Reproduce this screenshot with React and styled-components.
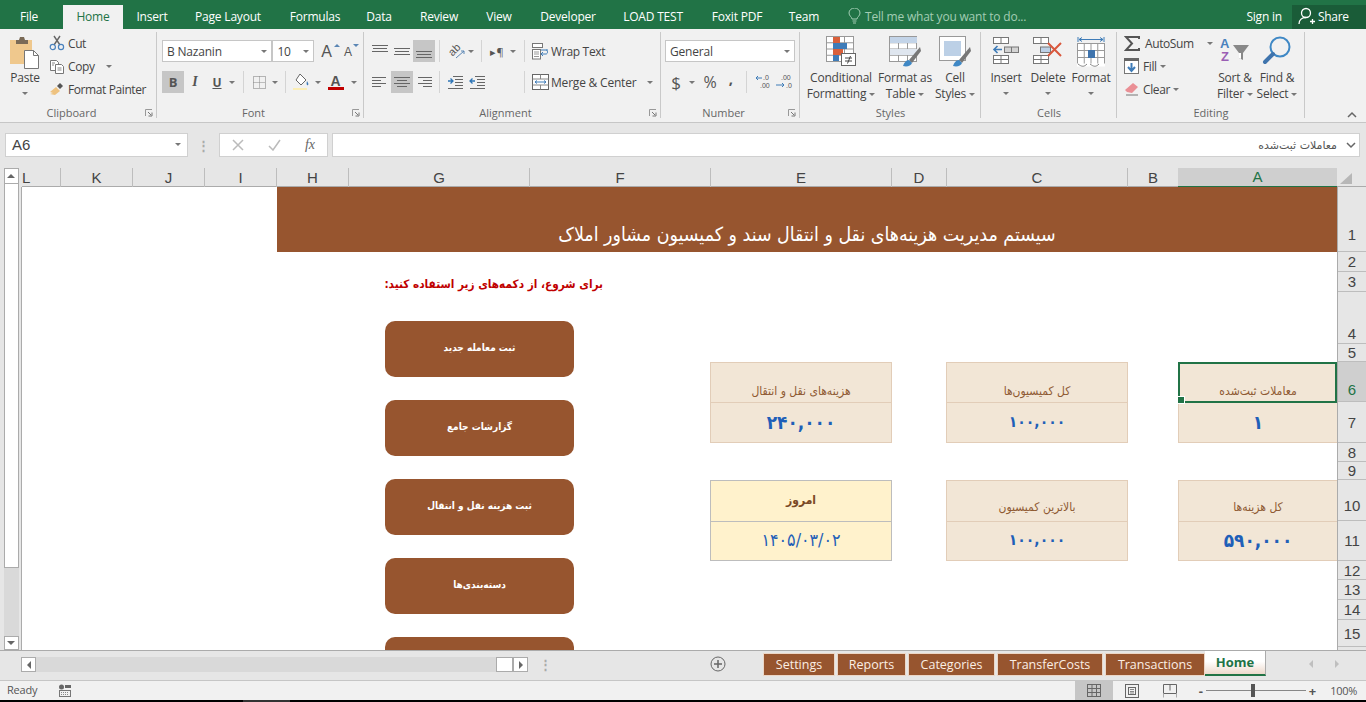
import React from "react";
import styled, { createGlobalStyle } from "styled-components";

const GlobalStyle = createGlobalStyle`
  html, body { margin: 0; padding: 0; background: #000; overflow: hidden; }
  * { box-sizing: border-box; }
`;

const UI = `"Open Sans", "Noto Sans", sans-serif`;
const FA = `"DejaVu Sans", sans-serif`;
const FA_NARROW = `"DejaVu Sans Condensed", "DejaVu Sans", sans-serif`;
const BROWN = "#97552f";
const COLS = "39px repeat(4, 72px) 181px 181px 181px 55px 181px 51px 158px";
const ROWS = "65px 20px 20px 52px 18px 40px 41px 19px 18px 41px 40px 19px 20px 20px 27px 20px";

const Page = styled.div`
  width: 1366px;
  height: 702px;
  display: grid;
  grid-template-rows: 29px 94px 45px 482px 30px 20px 2px;
  font-family: ${UI};
  font-size: 12px;
  color: #444;
  overflow: hidden;
`;

/* title row */
const TabRow = styled.div`
  background: #217346;
  display: flex;
  align-items: flex-end;
`;
const MenuTab = styled.div`
  width: ${(p) => p.$w}px;
  margin-left: ${(p) => p.$ml ?? 0}px;
  height: 24px;
  padding-bottom: 2px;
  display: flex;
  align-items: center;
  justify-content: center;
  white-space: nowrap;
  letter-spacing: -0.2px;
  color: ${(p) => (p.$active ? "#217346" : "#fff")};
  background: ${(p) => (p.$active ? "#f1f1f1" : "transparent")};
`;
const TellMe = styled.div`
  margin-left: 21px;
  height: 24px;
  padding-bottom: 2px;
  display: flex;
  align-items: center;
  gap: 4px;
  color: #a3cdb4;
  letter-spacing: -0.2px;
`;
const SignIn = styled.div`
  margin-left: auto;
  height: 24px;
  padding-bottom: 2px;
  display: flex;
  align-items: center;
  color: #fff;
  padding-right: 10px;
  letter-spacing: -0.2px;
`;
const Share = styled.div`
  width: 74px;
  height: 24px;
  padding-left: 6px;
  padding-bottom: 2px;
  display: flex;
  align-items: center;
  gap: 2px;
  color: #fff;
  background: #1a5c38;
  letter-spacing: -0.3px;
`;

/* ribbon */
const Ribbon = styled.div`
  background: #f1f1f1;
  border-bottom: 1px solid #c6c6c6;
  display: flex;
  position: relative;
`;
const Group = styled.div`
  width: ${(p) => p.$w}px;
  display: flex;
  flex-direction: column;
  position: relative;
  &::after {
    content: "";
    position: absolute;
    right: 0;
    top: 3px;
    bottom: 4px;
    width: 1px;
    background: #c9c9c9;
  }
`;
const GroupBody = styled.div`
  height: 76px;
  display: flex;
  padding: ${(p) => p.$top ?? 7}px 0 0 ${(p) => p.$left ?? 0}px;
  flex-direction: ${(p) => (p.$col ? "column" : "row")};
  gap: ${(p) => p.$gap ?? 0}px;
`;
const GroupFoot = styled.div`
  flex: 1;
  display: flex;
  align-items: center;
  font-size: 11px;
  color: #666;
  padding-bottom: 2px;
`;
const FootLabel = styled.div`
  flex: 1;
  text-align: center;
`;
const Launcher = styled.svg`
  width: 8px;
  height: 8px;
  margin: 0 4px 0 2px;
  flex: none;
`;
const ToolRows = styled.div`
  display: flex;
  flex-direction: column;
  gap: 9px;
  padding-top: 4px;
`;
const Row = styled.div`
  display: flex;
  align-items: center;
  height: ${(p) => p.$h ?? 22}px;
`;
const BigButton = styled.div`
  width: ${(p) => p.$w}px;
  display: flex;
  flex-direction: column;
  align-items: center;
  text-align: center;
  line-height: 16px;
  letter-spacing: -0.2px;
  white-space: nowrap;
`;
const BigIcon = styled.div`
  height: 34px;
  display: flex;
  align-items: flex-start;
  justify-content: center;
`;
const Caret = styled.span`
  display: inline-block;
  flex: none;
  width: 0;
  height: 0;
  margin-left: ${(p) => p.$ml ?? 0}px;
  margin-top: ${(p) => p.$mt ?? 0}px;
  border-left: 3px solid transparent;
  border-right: 3px solid transparent;
  border-top: 3px solid #777;
  vertical-align: middle;
`;
const SmallStack = styled.div`
  width: ${(p) => p.$w}px;
  margin-left: ${(p) => p.$ml ?? 0}px;
  margin-top: -4px;
  display: flex;
  flex-direction: column;
  gap: 1px;
  letter-spacing: -0.4px;
`;
const SmallItem = styled.div`
  display: flex;
  align-items: center;
  height: 22px;
  gap: ${(p) => p.$gap ?? 3}px;
  white-space: nowrap;
`;
const WideItem = styled(SmallItem)`
  gap: 2px;
  letter-spacing: ${(p) => p.$ls ?? -0.2}px;
`;
const Combo = styled.div`
  width: ${(p) => p.$w}px;
  height: 22px;
  background: #fff;
  border: 1px solid #c6c6c6;
  display: flex;
  align-items: center;
  justify-content: space-between;
  padding: 0 4px;
  letter-spacing: -0.2px;
`;
const Tool = styled.div`
  width: ${(p) => p.$w ?? 22}px;
  height: ${(p) => p.$h ?? 22}px;
  flex: none;
  display: flex;
  align-items: center;
  justify-content: center;
  padding-bottom: ${(p) => p.$pb ?? 0}px;
  background: ${(p) => (p.$on ? "#c6c6c6" : "transparent")};
  color: #555;
  font-family: ${(p) => (p.$serif ? `"Liberation Serif", serif` : UI)};
  font-weight: ${(p) => (p.$bold ? 700 : 400)};
  font-style: ${(p) => (p.$italic ? "italic" : "normal")};
  text-decoration: ${(p) => (p.$under ? "underline" : "none")};
  font-size: ${(p) => p.$size ?? 13}px;
`;
const RowSep = styled.div`
  width: 1px;
  height: 22px;
  background: #d4d4d4;
  flex: none;
  margin-left: ${(p) => p.$l}px;
  margin-right: ${(p) => p.$r}px;
`;
const GrowA = styled.div`
  position: relative;
  width: ${(p) => p.$w}px;
  margin-left: ${(p) => p.$ml ?? 0}px;
  height: 20px;
  display: flex;
  align-items: flex-end;
  font-family: "Liberation Sans", sans-serif;
  font-size: ${(p) => p.$size}px;
  line-height: 18px;
  color: #555;
  &::after {
    content: "";
    position: absolute;
    left: ${(p) => p.$size - 3}px;
    top: 3px;
    border-left: 3px solid transparent;
    border-right: 3px solid transparent;
    ${(p) => (p.$down ? "border-top: 3px solid #5b86b4;" : "border-bottom: 3px solid #5b86b4;")}
  }
`;
const CollapseBtn = styled.svg`
  position: absolute;
  right: 9px;
  bottom: 4px;
  width: 10px;
  height: 7px;
`;
const TinyText = styled.text`
  font-family: "Liberation Sans", sans-serif;
  font-size: 7px;
  fill: #555;
`;

/* formula bar */
const FormulaStrip = styled.div`
  background: #e6e6e6;
  padding: 10px 6px 11px 5px;
  display: flex;
  align-items: stretch;
`;
const NameBox = styled.div`
  width: 183px;
  background: #fff;
  border: 1px solid #d0d0d0;
  display: flex;
  align-items: center;
  justify-content: space-between;
  padding: 0 6px 1px 6px;
  font-family: "Liberation Sans", sans-serif;
  font-size: 15px;
  color: #444;
`;
const Dots = styled.div`
  width: 31px;
  display: flex;
  align-items: center;
  justify-content: center;
  color: #aaa;
  font-size: 13px;
  font-weight: 700;
`;
const FxBox = styled.div`
  width: 109px;
  margin-right: 4px;
  background: #fff;
  border: 1px solid #d0d0d0;
  display: flex;
  align-items: center;
  justify-content: space-between;
  padding: 0 12px 0 12px;
  color: #bbb;
`;
const FxMark = styled.span`
  font-family: "Liberation Serif", serif;
  font-style: italic;
  font-size: 14px;
  color: #666;
`;
const FormulaInput = styled.div`
  flex: 1;
  background: #fff;
  border: 1px solid #d0d0d0;
  display: flex;
  align-items: center;
  padding: 0 3px 0 0;
`;
const FormulaText = styled.div`
  flex: 1;
  direction: rtl;
  font-family: ${FA};
  font-size: 11px;
  color: #555;
`;
const ChevronBox = styled.svg`
  width: 10px;
  height: 7px;
  margin-left: 9px;
`;

/* sheet */
const SheetWrap = styled.div`
  display: flex;
  background: #e6e6e6;
  min-height: 0;
`;
const VScroll = styled.div`
  width: 22px;
  display: flex;
  flex-direction: column;
  align-items: center;
`;
const ScrollArrow = styled.div`
  width: 15px;
  height: ${(p) => p.$h ?? 15}px;
  flex: none;
  background: #fff;
  border: 1px solid #ababab;
  display: flex;
  align-items: center;
  justify-content: center;
`;
const Tri = styled.span`
  width: 0;
  height: 0;
  ${(p) => p.$dir === "up" && "border-left:4px solid transparent;border-right:4px solid transparent;border-bottom:4px solid #666;"}
  ${(p) => p.$dir === "down" && "border-left:4px solid transparent;border-right:4px solid transparent;border-top:4px solid #666;"}
  ${(p) => p.$dir === "left" && "border-top:4px solid transparent;border-bottom:4px solid transparent;border-right:4px solid #666;"}
  ${(p) => p.$dir === "right" && "border-top:4px solid transparent;border-bottom:4px solid transparent;border-left:4px solid #666;"}
`;
const VThumb = styled.div`
  width: 15px;
  height: 384px;
  flex: none;
  background: #fff;
  border: 1px solid #ababab;
  border-top: 0;
`;
const VTrack = styled.div`
  flex: 1;
  width: 15px;
  background: #d9d9d9;
`;
const SheetMain = styled.div`
  flex: 1;
  display: flex;
  flex-direction: column;
  min-width: 0;
`;
const ColumnBar = styled.div`
  height: 19px;
  display: grid;
  grid-template-columns: ${COLS} 29px;
  background: #e6e6e6;
  border-bottom: 1px solid #ababab;
`;
const ColHead = styled.div`
  display: flex;
  align-items: center;
  justify-content: ${(p) => (p.$start ? "flex-start" : "center")};
  padding-bottom: 1px;
  font-family: "Liberation Sans", sans-serif;
  font-size: 15px;
  color: ${(p) => (p.$on ? "#217346" : "#444")};
  background: ${(p) => (p.$on ? "#cfcfcf" : "transparent")};
  border-right: 1px solid #bdbdbd;
  ${(p) => p.$on && "border-bottom: 2px solid #217346; margin: 0 0 -1px -1px; border-right: 0;"}
`;
const Corner = styled.div`
  position: relative;
  &::after {
    content: "";
    position: absolute;
    left: 3px;
    bottom: 3px;
    border-left: 12px solid transparent;
    border-bottom: 11px solid #b7b7b7;
  }
`;
const SheetBody = styled.div`
  flex: 1;
  min-height: 0;
  display: flex;
  position: relative;
  overflow: hidden;
  border-left: 1px solid #ababab;
  margin-left: -1px;
`;
const Cells = styled.div`
  width: 1315px;
  background: #fff;
  display: grid;
  grid-template-columns: ${COLS};
  grid-template-rows: ${ROWS};
`;
const TitleCell = styled.div`
  grid-column: 5 / 13;
  grid-row: 1;
  background: ${BROWN};
  color: #fff;
  direction: rtl;
  font-family: ${FA_NARROW};
  font-size: 19.4px;
  display: flex;
  align-items: flex-end;
  justify-content: center;
  padding-bottom: 6px;
  white-space: nowrap;
`;
const LabelCell = styled.div`
  grid-column: ${(p) => p.$col};
  grid-row: ${(p) => p.$row};
  margin-left: -1px;
  position: relative;
  background: ${(p) => (p.$yellow ? "#fff2cc" : "#f2e6d6")};
  border: 1px solid ${(p) => (p.$yellow ? "#bdbdbd" : "#e2cdb8")};
  border-bottom-width: 0;
  border-right-width: ${(p) => (p.$edge ? 0 : 1)}px;
  color: ${(p) => (p.$yellow ? "#7b4a26" : "#8f5a33")};
  direction: rtl;
  font-family: ${FA_NARROW};
  font-size: 12px;
  font-weight: ${(p) => (p.$yellow ? 700 : 400)};
  display: flex;
  justify-content: center;
  align-items: ${(p) => (p.$yellow ? "center" : "flex-end")};
  padding-bottom: ${(p) => p.$pb}px;
  white-space: nowrap;
`;
const ValueCell = styled.div`
  grid-column: ${(p) => p.$col};
  grid-row: ${(p) => p.$row};
  margin-left: -1px;
  background: ${(p) => (p.$yellow ? "#fff2cc" : "#f2e6d6")};
  border: 1px solid ${(p) => (p.$yellow ? "#bdbdbd" : "#e2cdb8")};
  border-right-width: ${(p) => (p.$edge ? 0 : 1)}px;
  color: #1f5fb8;
  direction: rtl;
  font-family: ${FA_NARROW};
  font-size: ${(p) => p.$size}px;
  font-weight: ${(p) => (p.$yellow ? 400 : 700)};
  padding-bottom: 2px;
  display: flex;
  align-items: center;
  justify-content: center;
`;
const SelectBox = styled.div`
  position: absolute;
  inset: -1px 0 -1px -1px;
  border: 2px solid #217346;
  &::after {
    content: "";
    position: absolute;
    left: -3px;
    bottom: -3px;
    width: 6px;
    height: 6px;
    background: #217346;
    border: 1px solid #fff;
  }
`;
const RowBar = styled.div`
  width: 29px;
  flex: none;
  background: #e6e6e6;
  border-left: 1px solid #ababab;
  display: grid;
  grid-template-rows: ${ROWS};
`;
const RowHead = styled.div`
  display: flex;
  align-items: center;
  justify-content: center;
  font-family: "Liberation Sans", sans-serif;
  font-size: 15px;
  padding-top: ${(p) => p.$pt}px;
  color: ${(p) => (p.$on ? "#217346" : "#444")};
  background: ${(p) => (p.$on ? "#cfcfcf" : "transparent")};
  border-bottom: 1px solid #bdbdbd;
`;
/* floating shapes drawn over the cells */
const Shapes = styled.div`
  position: absolute;
  left: 363px;
  top: 87px;
  width: 218px;
  display: flex;
  flex-direction: column;
`;
const Note = styled.div`
  direction: rtl;
  color: #c00000;
  font-family: ${FA_NARROW};
  font-weight: 700;
  font-size: 11.7px;
  height: 47px;
  padding-top: 3px;
  white-space: nowrap;
`;
const ShapeList = styled.div`
  display: flex;
  flex-direction: column;
  gap: 23px;
  width: 189px;
`;
const ShapeButton = styled.div`
  height: 56px;
  flex: none;
  background: ${BROWN};
  border-radius: 10px;
  color: #fff;
  direction: rtl;
  font-family: ${FA_NARROW};
  font-weight: 700;
  font-size: 10px;
  padding-bottom: 4px;
  display: flex;
  align-items: center;
  justify-content: center;
`;

/* sheet tabs */
const SheetTabs = styled.div`
  background: #e6e6e6;
  border-top: 1px solid #ababab;
  display: flex;
  align-items: flex-start;
  padding-left: 21px;
`;
const HScroll = styled.div`
  width: 507px;
  height: 15px;
  margin-top: 6px;
  flex: none;
  display: flex;
  background: #d9d9d9;
`;
const HThumbSpace = styled.div`
  flex: 1;
`;
const HThumb = styled.div`
  width: 17px;
  background: #fff;
  border: 1px solid #ababab;
`;
const TabDots = styled.div`
  width: 34px;
  margin-top: 4px;
  text-align: center;
  color: #aaa;
  font-weight: 700;
  font-size: 13px;
`;
const AddSheet = styled.svg`
  width: 16px;
  height: 16px;
  margin: 5px 0 0 148px;
  flex: none;
`;
const TabStrip = styled.div`
  margin-left: 37px;
  display: flex;
  gap: 2px;
  align-items: flex-start;
  height: 29px;
`;
const SheetTab = styled.div`
  width: ${(p) => p.$w}px;
  height: 23px;
  margin-top: 2px;
  padding-bottom: 1px;
  display: flex;
  align-items: center;
  justify-content: center;
  white-space: nowrap;
  font-size: 12.5px;
  background: ${BROWN};
  color: #fbeee4;
  border: 1px solid #ecd6c6;
`;
const HomeTab = styled.div`
  width: 61px;
  height: 25px;
  margin-left: -2px;
  padding-bottom: 1px;
  display: flex;
  align-items: center;
  justify-content: center;
  font-size: 13px;
  font-weight: 700;
  color: #217346;
  background: linear-gradient(#fff 45%, #ecd9cc);
  border-bottom: 2px solid #217346;
  border-right: 1px solid #ababab;
`;
const TabNav = styled.div`
  flex: 1;
  display: flex;
  justify-content: flex-end;
  gap: 22px;
  padding: 9px 27px 0 0;
  opacity: 0.3;
`;

/* status bar */
const StatusBar = styled.div`
  background: #f1f1f1;
  border-top: 1px solid #c6c6c6;
  display: flex;
  align-items: center;
  padding-left: 7px;
  font-size: 11px;
  letter-spacing: -0.2px;
  color: #555;
`;
const ReadyText = styled.span`
  padding-bottom: 3px;
`;
const MacroIcon = styled.svg`
  width: 13px;
  height: 13px;
  margin-left: 21px;
`;
const StatusRight = styled.div`
  margin-left: auto;
  height: 100%;
  display: flex;
  align-items: center;
`;
const ViewBtn = styled.div`
  width: 38px;
  height: 100%;
  display: flex;
  align-items: center;
  justify-content: center;
  background: ${(p) => (p.$on ? "#c6c6c6" : "transparent")};
`;
const Zoomer = styled.div`
  display: flex;
  align-items: center;
  margin-left: 10px;
  gap: 3px;
  color: #555;
  font-size: 13px;
  font-weight: 700;
`;
const ZoomTrack = styled.div`
  width: 100px;
  height: 1px;
  background: #888;
  position: relative;
`;
const ZoomThumb = styled.div`
  position: absolute;
  left: 45px;
  top: -6px;
  width: 4px;
  height: 13px;
  background: #555;
`;
const ZoomPct = styled.div`
  width: 50px;
  text-align: right;
  padding-right: 9px;
  letter-spacing: -0.3px;
`;
const BottomEdge = styled.div`
  background: #000;
  display: flex;
  &::before {
    content: "";
    margin-left: 243px;
    width: 47px;
    background: #333;
  }
`;

/* drawings */
const Dlg = () => (
  <Launcher viewBox="0 0 8 8">
    <path d="M0.5 7V0.5H7" fill="none" stroke="#999" />
    <path d="M3 3l3 3M7 3.5V7H3.5" fill="none" stroke="#777" />
  </Launcher>
);
const Lines = ({ rows }) => (
  <svg width="16" height="14" viewBox="0 0 16 14">
    {rows.map(([x1, x2, y], i) => (
      <line key={i} x1={x1} x2={x2} y1={y + 0.5} y2={y + 0.5} stroke="#666" />
    ))}
  </svg>
);
const PasteIcon = () => (
  <svg width="32" height="34" viewBox="0 0 32 34">
    <rect x="1" y="4" width="22" height="24" fill="#efc88d" />
    <path d="M7 4h3l1-3h4l1 3h3v4H7z" fill="#7a6a56" />
    <path d="M15.5 14.5h9l5 5v13h-14z" fill="#fff" stroke="#777" />
    <path d="M24.5 14.5v5h5" fill="none" stroke="#777" />
  </svg>
);
const CutIcon = () => (
  <svg width="16" height="16" viewBox="0 0 16 16">
    <path d="M5 1l6 9M11 1l-6 9" stroke="#666" strokeWidth="1.4" fill="none" />
    <circle cx="3.8" cy="12" r="2.6" fill="none" stroke="#4a82bd" strokeWidth="1.2" />
    <circle cx="12" cy="12" r="2.6" fill="none" stroke="#4a82bd" strokeWidth="1.2" />
  </svg>
);
const CopyIcon = () => (
  <svg width="16" height="15" viewBox="0 0 16 15">
    <path d="M1.5 1.5h6l2 2v8h-8z" fill="#fff" stroke="#777" />
    <path d="M6.5 5.5h6l2 2v7h-8z" fill="#fff" stroke="#777" />
    <path d="M8.5 9h4M8.5 11h4M3 4h3M3 6h2" stroke="#888" />
  </svg>
);
const PainterIcon = () => (
  <svg width="16" height="14" viewBox="0 0 16 14">
    <path d="M7 5l4 4-5 4-5-1 3-1-3-1z" fill="#eec27f" />
    <path d="M8 4l3-3 3 3-3 3z" fill="#555" />
  </svg>
);
const BorderIcon = () => (
  <svg width="15" height="15" viewBox="0 0 15 15">
    <rect x="1.5" y="1.5" width="12" height="12" fill="none" stroke="#777" strokeDasharray="1 1" />
    <path d="M7.5 1.5v12M1.5 7.5h12" stroke="#888" strokeDasharray="1 1" />
  </svg>
);
const FillIcon = () => (
  <svg width="18" height="18" viewBox="0 0 18 18">
    <path d="M7 1l6 6-5 5-5-5z" fill="#fff" stroke="#666" />
    <path d="M14 8c1 2 2 3 1 4s-2-1-1-4z" fill="#3f7cb8" />
    <rect x="0" y="15" width="14" height="2" fill="#fbeeb5" />
  </svg>
);
const ColorA = () => (
  <svg width="18" height="18" viewBox="0 0 18 18">
    <text x="3.5" y="12.5" fontFamily="Liberation Sans" fontWeight="700" fontSize="14" fill="#555">A</text>
    <rect x="1" y="14" width="16" height="3" fill="#c00000" />
  </svg>
);
const OrientIcon = () => (
  <svg width="20" height="18" viewBox="0 0 20 18">
    <text x="2" y="12" fontFamily="Liberation Sans" fontSize="11" fill="#555" transform="rotate(-45 7 9)">ab</text>
    <path d="M9 16l8-7M14 9h3v3" stroke="#5b86b4" fill="none" />
  </svg>
);
const IndentIcon = ({ flip }) => (
  <svg width="17" height="14" viewBox="0 0 17 14">
    <path d="M6 1.5h10M8 4.5h8M8 7.5h8M8 10.5h8M1 13.5h15" stroke="#666" />
    <path d={flip ? "M1 6h5M3.5 3.5L1 6l2.5 2.5" : "M1 6h5M3.5 3.5L6 6 3.5 8.5"} stroke="#2e75b6" fill="none" strokeWidth="1.3" />
  </svg>
);
const WrapIcon = () => (
  <svg width="17" height="17" viewBox="0 0 17 17">
    <rect x="0.5" y="0.5" width="10" height="4" fill="#fff" stroke="#777" />
    <rect x="0.5" y="6.5" width="8" height="9.5" fill="#fff" stroke="#777" />
    <path d="M2 9h5M2 11h5M2 13.5h5" stroke="#999" />
    <path d="M9 7h7M9 11h5c2 0 2-4 0-4M11 9l-2 2 2 2" stroke="#3f7cb8" fill="none" />
  </svg>
);
const MergeIcon = () => (
  <svg width="17" height="16" viewBox="0 0 17 16">
    <rect x="0.5" y="0.5" width="16" height="15" fill="#fff" stroke="#666" />
    <path d="M0.5 5h16M0.5 11h16M8.5 0.5V5M8.5 11v4.5" stroke="#888" />
    <path d="M3 8h11M5 6.5L3 8l2 1.5M12 6.5L14 8l-2 1.5" stroke="#3f7cb8" fill="none" />
  </svg>
);
const DecIcon = ({ inc }) => (
  <svg width="20" height="18" viewBox="0 0 20 18">
    <TinyText x={inc ? 8 : 6} y="7">{inc ? ".0" : ".00"}</TinyText>
    <TinyText x={inc ? 5 : 11} y="15">{inc ? ".00" : ".0"}</TinyText>
    <path d={inc ? "M1 5h6M3 3L1 5l2 2" : "M1 12h8M7 10l2 2-2 2"} stroke="#3f7cb8" fill="none" />
  </svg>
);
const SheetGrid = ({ children, w = 30, h = 26, rows = 4, cols = 3 }) => {
  const xs = Array.from({ length: cols + 1 }, (_, i) => (i * (w - 1)) / cols + 0.5);
  const ys = Array.from({ length: rows + 1 }, (_, i) => (i * (h - 1)) / rows + 0.5);
  return (
    <>
      <rect x="0.5" y="0.5" width={w - 1} height={h - 1} fill="#fff" />
      {xs.map((x) => <line key={"x" + x} x1={x} x2={x} y1="0" y2={h} stroke="#999" />)}
      {ys.map((y) => <line key={"y" + y} y1={y} y2={y} x1="0" x2={w} stroke="#999" />)}
      {children}
    </>
  );
};
const CondIcon = () => (
  <svg width="30" height="32" viewBox="0 0 30 32">
    <SheetGrid w={28} h={26} />
    <rect x="7" y="1" width="7" height="6" fill="#d9603b" />
    <rect x="7" y="7" width="14" height="6" fill="#3f7cb8" />
    <rect x="7" y="13" width="10" height="6" fill="#d9603b" />
    <rect x="7" y="19" width="6" height="6" fill="#3f7cb8" />
    <rect x="15.5" y="17.5" width="14" height="12" fill="#fff" stroke="#666" />
    <path d="M19 22h7M19 25h7M24.5 20l-3 7.5" stroke="#444" fill="none" />
  </svg>
);
const TableIcon = () => (
  <svg width="32" height="32" viewBox="0 0 32 32">
    <SheetGrid w={28} h={26} />
    <rect x="1" y="1" width="27" height="6" fill="#c3d4e8" />
    <rect x="1" y="13" width="27" height="6" fill="#dfe6ef" />
    <path d="M31 11L20 24l3 3 9-12z" fill="#777" />
    <path d="M20 24c-3 0-5 3-6 6 4 1 8 0 9-3z" fill="#3f88c5" />
  </svg>
);
const StyleIcon = () => (
  <svg width="32" height="32" viewBox="0 0 32 32">
    <rect x="0.5" y="0.5" width="26" height="24" fill="#fff" stroke="#999" />
    <rect x="5" y="5" width="17" height="15" fill="#bcd0e6" />
    <path d="M31 11L20 24l3 3 9-12z" fill="#777" />
    <path d="M20 24c-3 0-5 3-6 6 4 1 8 0 9-3z" fill="#3f88c5" />
  </svg>
);
const InsertIcon = () => (
  <svg width="28" height="28" viewBox="0 0 28 28">
    <rect x="1.5" y="1.5" width="15" height="6" fill="#fff" stroke="#777" />
    <path d="M9 1.5v6" stroke="#777" />
    <rect x="12.5" y="11" width="14" height="5.5" fill="#d3d3d3" stroke="#777" />
    <path d="M19.5 11v5.5" stroke="#777" />
    <path d="M2 13.5h8M5.5 10l-3.5 3.5L5.5 17" stroke="#3f7cb8" strokeWidth="1.6" fill="none" />
    <rect x="1.5" y="19.5" width="15" height="8" fill="#fff" stroke="#777" />
    <path d="M9 19.5v8M1.5 23.5h15" stroke="#777" />
  </svg>
);
const DeleteIcon = () => (
  <svg width="32" height="28" viewBox="0 0 32 28">
    <rect x="1.5" y="1.5" width="15" height="6" fill="#fff" stroke="#777" />
    <path d="M9 1.5v6" stroke="#777" />
    <rect x="8.5" y="11" width="10" height="5.5" fill="#bcd0e6" stroke="#777" />
    <rect x="1.5" y="19.5" width="15" height="8" fill="#fff" stroke="#777" />
    <path d="M9 19.5v8M1.5 23.5h15" stroke="#777" />
    <path d="M16 7l13 13M29 7L16 20" stroke="#d9573c" strokeWidth="2" />
  </svg>
);
const FormatIcon = () => (
  <svg width="30" height="32" viewBox="0 0 30 32">
    <path d="M2 1v5M28 1v5M3 3.5h24M3 3.5l3-2M3 3.5l3 2M27 3.5l-3-2M27 3.5l-3 2" stroke="#3f7cb8" fill="none" />
    <g transform="translate(1 7)">
      <SheetGrid w={28} h={22} rows={3} cols={4} />
      <rect x="11" y="7" width="7" height="8" fill="#3f74ad" />
    </g>
    <path d="M1 29h28" stroke="#fff" strokeWidth="3" />
    <path d="M2 28c4 3 6 3 9 0M14 28c4 3 6 3 9 0" stroke="#888" fill="none" />
  </svg>
);
const SigmaIcon = () => (
  <svg width="17" height="15" viewBox="0 0 17 15">
    <path d="M15 3V1H2l6 6.5L2 14h13v-2" fill="none" stroke="#555" strokeWidth="2" />
  </svg>
);
const FillDownIcon = () => (
  <svg width="15" height="16" viewBox="0 0 15 16">
    <rect x="0.5" y="0.5" width="14" height="15" fill="#fff" stroke="#777" />
    <rect x="0" y="0" width="15" height="3" fill="#666" />
    <path d="M7.5 5v8M4 9l3.5 4L11 9" stroke="#3f7cb8" strokeWidth="2" fill="none" />
  </svg>
);
const EraserIcon = () => (
  <svg width="15" height="14" viewBox="0 0 15 14">
    <path d="M9 1l5 4-6 6-5-1-2-2z" fill="#ea8f95" />
    <path d="M2 13h12" stroke="#777" />
  </svg>
);
const SortIcon = () => (
  <svg width="32" height="28" viewBox="0 0 32 28">
    <text x="1" y="12" fontFamily="Liberation Sans" fontWeight="700" fontSize="13" fill="#4a82bd">A</text>
    <text x="2" y="25" fontFamily="Liberation Sans" fontWeight="700" fontSize="13" fill="#9a5fb4">Z</text>
    <path d="M14 9h16l-6 8v7l-4-2v-5z" fill="#888" />
    <path d="M20 17v5l2 1v-6z" fill="#fff" />
  </svg>
);
const FindIcon = () => (
  <svg width="30" height="30" viewBox="0 0 30 30">
    <circle cx="18" cy="11" r="9.5" fill="none" stroke="#3f88c5" strokeWidth="2" />
    <path d="M11 18L3 26" stroke="#3f74ad" strokeWidth="4" strokeLinecap="round" />
  </svg>
);
const BulbIcon = () => (
  <svg width="13" height="16" viewBox="0 0 13 16">
    <path d="M4 11c0-2-3-3-3-6a5.5 5 0 0 1 11 0c0 3-3 4-3 6zM4.5 13h4M5 15h3" fill="none" stroke="#a3cdb4" />
  </svg>
);
const PersonIcon = () => (
  <svg width="18" height="18" viewBox="0 0 18 18">
    <circle cx="8" cy="6" r="4.5" fill="none" stroke="#fff" strokeWidth="1.3" />
    <path d="M1 17c0-4 3-6.500 7-6.500M12 14.500h5M14.500 12v5" fill="none" stroke="#fff" strokeWidth="1.3" />
  </svg>
);
const CloseMark = () => (
  <svg width="12" height="12" viewBox="0 0 12 12">
    <path d="M1 1l10 10M11 1L1 11" stroke="#bbb" strokeWidth="1.5" />
  </svg>
);
const CheckMark = () => (
  <svg width="13" height="12" viewBox="0 0 13 12">
    <path d="M1 7l4 4 7-10" stroke="#bbb" strokeWidth="1.5" fill="none" />
  </svg>
);
const NormalViewIcon = () => (
  <svg width="14" height="13" viewBox="0 0 14 13">
    <rect x="0.5" y="0.5" width="13" height="12" fill="none" stroke="#666" />
    <path d="M5 0.5v12M9.500 0.500v12M0.500 4.500h13M0.500 8.500h13" stroke="#666" />
  </svg>
);
const PageViewIcon = () => (
  <svg width="14" height="14" viewBox="0 0 14 14">
    <rect x="0.5" y="0.5" width="13" height="13" fill="none" stroke="#666" />
    <rect x="3.5" y="3.5" width="7" height="7" fill="none" stroke="#666" />
    <path d="M5 5.500h4M5 7.500h4M5 9h4" stroke="#888" />
  </svg>
);
const BreakViewIcon = () => (
  <svg width="14" height="14" viewBox="0 0 14 14">
    <path d="M0.500 9.500V0.500h13v9h-13M7 0.500v6M4 9.500h6" fill="none" stroke="#666" />
    <path d="M0.500 9.500v4M13.500 9.500v4" stroke="#aaa" />
  </svg>
);

const menu = [
  ["File", 58, 0], ["Home", 60, 5], ["Insert", 58], ["Page Layout", 94], ["Formulas", 80], ["Data", 48],
  ["Review", 72], ["View", 48], ["Developer", 90], ["LOAD TEST", 80], ["Foxit PDF", 88], ["Team", 46],
];
const columns = ["K", "J", "I", "H", "G", "F", "E", "D", "C", "B"];
const sheets = [
  ["Settings", 72], ["Reports", 69], ["Categories", 87], ["TransferCosts", 106], ["Transactions", 100],
];
const shapes = ["ثبت معامله جدید", "گزارشات جامع", "ثبت هزینه نقل و انتقال", "دسته‌بندی‌ها", ""];
const cards = [
  { col: 8, row: 6, label: "هزینه‌های نقل و انتقال", value: "۲۴۰,۰۰۰", size: 18.9, pb: 4 },
  { col: 10, row: 6, label: "کل کمیسیون‌ها", value: "۱۰۰,۰۰۰", size: 15.5, pb: 4 },
  { col: 12, row: 6, label: "معاملات ثبت‌شده", value: "۱", size: 18.9, pb: 4, edge: true, selected: true },
  { col: 8, row: 10, label: "امروز", value: "۱۴۰۵/۰۳/۰۲", size: 17.7, pb: 3, yellow: true },
  { col: 10, row: 10, label: "بالاترین کمیسیون", value: "۱۰۰,۰۰۰", size: 15.5, pb: 7 },
  { col: 12, row: 10, label: "کل هزینه‌ها", value: "۵۹۰,۰۰۰", size: 18.9, pb: 7, edge: true },
];
const rowNums = [1, 2, 3, 4, 5, 6, 7, 8, 9, 10, 11, 12, 13, 14, 15, 16];
const rowOffset = { 1: 30, 4: 32, 6: 16, 10: 11 };

const App = () => (
  <>
    <GlobalStyle />
    <Page>
      <TabRow>
        {menu.map(([name, w, ml]) => (
          <MenuTab key={name} $w={w} $ml={ml} $active={name === "Home"}>{name}</MenuTab>
        ))}
        <TellMe><BulbIcon />Tell me what you want to do...</TellMe>
        <SignIn>Sign in</SignIn>
        <Share><PersonIcon />Share</Share>
      </TabRow>

      <Ribbon>
        <Group $w={157}>
          <GroupBody $left={8}>
            <BigButton $w={34}>
              <BigIcon><PasteIcon /></BigIcon>
              Paste
              <Caret $mt={6} />
            </BigButton>
            <SmallStack $ml={7}>
              <SmallItem><CutIcon />Cut</SmallItem>
              <SmallItem><CopyIcon />Copy<Caret $ml={8} /></SmallItem>
              <SmallItem><PainterIcon />Format Painter</SmallItem>
            </SmallStack>
          </GroupBody>
          <GroupFoot><FootLabel>Clipboard</FootLabel><Dlg /></GroupFoot>
        </Group>

        <Group $w={207}>
          <GroupBody $col $left={5} $top={11} $gap={9}>
            <Row>
              <Combo $w={111}>B Nazanin<Caret /></Combo>
              <Combo $w={42}>10<Caret /></Combo>
              <GrowA $w={23} $size={16} $ml={7}>A</GrowA>
              <GrowA $w={20} $size={12} $down>A</GrowA>
            </Row>
            <Row>
              <Tool $on $bold $size={13}>B</Tool>
              <Tool $italic $serif $bold $size={14}>I</Tool>
              <Tool $under $bold $size={12}>U</Tool>
              <Caret $ml={1} />
              <RowSep $l={8} $r={8} />
              <BorderIcon />
              <Caret $ml={5} />
              <RowSep $l={7} $r={7} />
              <FillIcon />
              <Caret $ml={4} />
              <Tool $w={30}><ColorA /></Tool>
              <Caret />
            </Row>
          </GroupBody>
          <GroupFoot><FootLabel>Font</FootLabel><Dlg /></GroupFoot>
        </Group>

        <Group $w={297}>
          <GroupBody $left={5}>
            <ToolRows>
              <Row>
                <Tool><Lines rows={[[0, 16, 1], [1, 15, 4], [0, 16, 7]]} /></Tool>
                <Tool><Lines rows={[[0, 16, 4], [1, 15, 7], [0, 16, 10]]} /></Tool>
                <Tool $on><Lines rows={[[0, 16, 7], [1, 15, 10], [0, 16, 13]]} /></Tool>
                <RowSep $l={4} $r={7} />
                <OrientIcon />
                <Caret $ml={1} />
                <RowSep $l={7} $r={6} />
                <Tool $size={11} $w={18}>▸¶</Tool>
                <Caret $ml={4} />
                <RowSep $l={8} $r={7} />
                <WideItem $ls={-0.3}><WrapIcon />Wrap Text</WideItem>
              </Row>
              <Row>
                <Tool><Lines rows={[[0, 14, 2], [0, 9, 5], [0, 14, 8], [0, 9, 11]]} /></Tool>
                <Tool $on><Lines rows={[[0, 16, 2], [3, 13, 5], [0, 16, 8], [3, 13, 11]]} /></Tool>
                <Tool><Lines rows={[[2, 16, 2], [7, 16, 5], [2, 16, 8], [7, 16, 11]]} /></Tool>
                <RowSep $l={4} $r={4} />
                <Tool><IndentIcon /></Tool>
                <Tool><IndentIcon flip /></Tool>
                <RowSep $l={36} $r={7} />
                <WideItem>
                  <MergeIcon />Merge &amp; Center<Caret $ml={9} />
                </WideItem>
              </Row>
            </ToolRows>
          </GroupBody>
          <GroupFoot><FootLabel>Alignment</FootLabel><Dlg /></GroupFoot>
        </Group>

        <Group $w={139}>
          <GroupBody $col $left={4} $top={11} $gap={9}>
            <Combo $w={130}>General<Caret /></Combo>
            <Row>
              <Tool $size={17} $w={22}>$</Tool>
              <Caret $ml={2} />
              <Tool $size={16} $w={30}>%</Tool>
              <Tool $size={15} $bold $w={12} $pb={8}>,</Tool>
              <RowSep $l={9} $r={8} />
              <DecIcon inc />
              <DecIcon />
            </Row>
          </GroupBody>
          <GroupFoot><FootLabel>Number</FootLabel><Dlg /></GroupFoot>
        </Group>

        <Group $w={181}>
          <GroupBody $left={6}>
            <BigButton $w={70}>
              <BigIcon><CondIcon /></BigIcon>
              Conditional
              <span>Formatting<Caret $ml={3} /></span>
            </BigButton>
            <BigButton $w={58}>
              <BigIcon><TableIcon /></BigIcon>
              Format as
              <span>Table<Caret $ml={3} /></span>
            </BigButton>
            <BigButton $w={42}>
              <BigIcon><StyleIcon /></BigIcon>
              Cell
              <span>Styles<Caret $ml={3} /></span>
            </BigButton>
          </GroupBody>
          <GroupFoot><FootLabel>Styles</FootLabel></GroupFoot>
        </Group>

        <Group $w={136}>
          <GroupBody $left={4}>
            <BigButton $w={42}>
              <BigIcon><InsertIcon /></BigIcon>
              Insert
              <Caret $mt={6} />
            </BigButton>
            <BigButton $w={42}>
              <BigIcon><DeleteIcon /></BigIcon>
              Delete
              <Caret $mt={6} />
            </BigButton>
            <BigButton $w={44}>
              <BigIcon><FormatIcon /></BigIcon>
              Format
              <Caret $mt={6} />
            </BigButton>
          </GroupBody>
          <GroupFoot><FootLabel>Cells</FootLabel></GroupFoot>
        </Group>

        <Group $w={188}>
          <GroupBody $left={7}>
            <SmallStack $w={90}>
              <SmallItem $gap={4}><SigmaIcon />AutoSum<Caret $ml={9} /></SmallItem>
              <SmallItem $gap={4}><FillDownIcon />Fill<Caret $ml={-1} /></SmallItem>
              <SmallItem $gap={4}><EraserIcon />Clear<Caret $ml={-1} /></SmallItem>
            </SmallStack>
            <BigButton $w={42}>
              <BigIcon><SortIcon /></BigIcon>
              Sort &amp;
              <span>Filter<Caret $ml={3} /></span>
            </BigButton>
            <BigButton $w={42}>
              <BigIcon><FindIcon /></BigIcon>
              Find &amp;
              <span>Select<Caret $ml={3} /></span>
            </BigButton>
          </GroupBody>
          <GroupFoot><FootLabel>Editing</FootLabel></GroupFoot>
        </Group>

        <CollapseBtn viewBox="0 0 10 7">
          <path d="M1 6l4-4 4 4" fill="none" stroke="#666" strokeWidth="1.5" />
        </CollapseBtn>
      </Ribbon>

      <FormulaStrip>
        <NameBox>A6<Caret /></NameBox>
        <Dots>⋮</Dots>
        <FxBox><CloseMark /><CheckMark /><FxMark>fx</FxMark></FxBox>
        <FormulaInput>
          <FormulaText>معاملات ثبت‌شده</FormulaText>
          <ChevronBox viewBox="0 0 10 7">
            <path d="M1 1l4 4 4-4" fill="none" stroke="#666" strokeWidth="1.5" />
          </ChevronBox>
        </FormulaInput>
      </FormulaStrip>

      <SheetWrap>
        <VScroll>
          <ScrollArrow $h={16}><Tri $dir="up" /></ScrollArrow>
          <VThumb />
          <VTrack />
          <ScrollArrow $h={14}><Tri $dir="down" /></ScrollArrow>
        </VScroll>
        <SheetMain>
          <ColumnBar>
            <ColHead $start>L</ColHead>
            {columns.map((c) => <ColHead key={c}>{c}</ColHead>)}
            <ColHead $on>A</ColHead>
            <Corner />
          </ColumnBar>
          <SheetBody>
            <Cells>
              <TitleCell>سیستم مدیریت هزینه‌های نقل و انتقال سند و کمیسیون مشاور املاک</TitleCell>
              {cards.map((c) => (
                <React.Fragment key={c.col + "-" + c.row}>
                  <LabelCell $col={c.col} $row={c.row} $yellow={c.yellow} $edge={c.edge} $pb={c.pb}>
                    {c.label}
                    {c.selected && <SelectBox />}
                  </LabelCell>
                  <ValueCell $col={c.col} $row={c.row + 1} $yellow={c.yellow} $edge={c.edge} $size={c.size}>
                    {c.value}
                  </ValueCell>
                </React.Fragment>
              ))}
            </Cells>
            <RowBar>
              {rowNums.map((n) => (
                <RowHead key={n} $on={n === 6} $pt={rowOffset[n] ?? 0}>{n}</RowHead>
              ))}
            </RowBar>
            <Shapes>
              <Note>برای شروع، از دکمه‌های زیر استفاده کنید:</Note>
              <ShapeList>
                {shapes.map((s, i) => <ShapeButton key={i}>{s}</ShapeButton>)}
              </ShapeList>
            </Shapes>
          </SheetBody>
        </SheetMain>
      </SheetWrap>

      <SheetTabs>
        <HScroll>
          <ScrollArrow><Tri $dir="left" /></ScrollArrow>
          <HThumbSpace />
          <HThumb />
          <ScrollArrow><Tri $dir="right" /></ScrollArrow>
        </HScroll>
        <TabDots>⋮</TabDots>
        <AddSheet viewBox="0 0 16 16">
          <circle cx="8" cy="8" r="7" fill="none" stroke="#666" />
          <path d="M8 4v8M4 8h8" stroke="#666" strokeWidth="1.5" />
        </AddSheet>
        <TabStrip>
          {sheets.map(([name, w]) => <SheetTab key={name} $w={w}>{name}</SheetTab>)}
          <HomeTab>Home</HomeTab>
        </TabStrip>
        <TabNav>
          <Tri $dir="left" />
          <Tri $dir="right" />
        </TabNav>
      </SheetTabs>

      <StatusBar>
        <ReadyText>Ready</ReadyText>
        <MacroIcon viewBox="0 0 13 13">
          <circle cx="3.500" cy="3" r="2.500" fill="#666" />
          <rect x="7" y="1" width="6" height="3" fill="#666" />
          <rect x="1.500" y="6.500" width="11" height="6" fill="none" stroke="#777" />
          <path d="M3 8.500h8M3 10.500h8" stroke="#888" strokeDasharray="1 1" />
        </MacroIcon>
        <StatusRight>
          <ViewBtn $on><NormalViewIcon /></ViewBtn>
          <ViewBtn><PageViewIcon /></ViewBtn>
          <ViewBtn><BreakViewIcon /></ViewBtn>
          <Zoomer>
            <span>-</span>
            <ZoomTrack><ZoomThumb /></ZoomTrack>
            <span>+</span>
          </Zoomer>
          <ZoomPct>100%</ZoomPct>
        </StatusRight>
      </StatusBar>
      <BottomEdge />
    </Page>
  </>
);

export default App;
